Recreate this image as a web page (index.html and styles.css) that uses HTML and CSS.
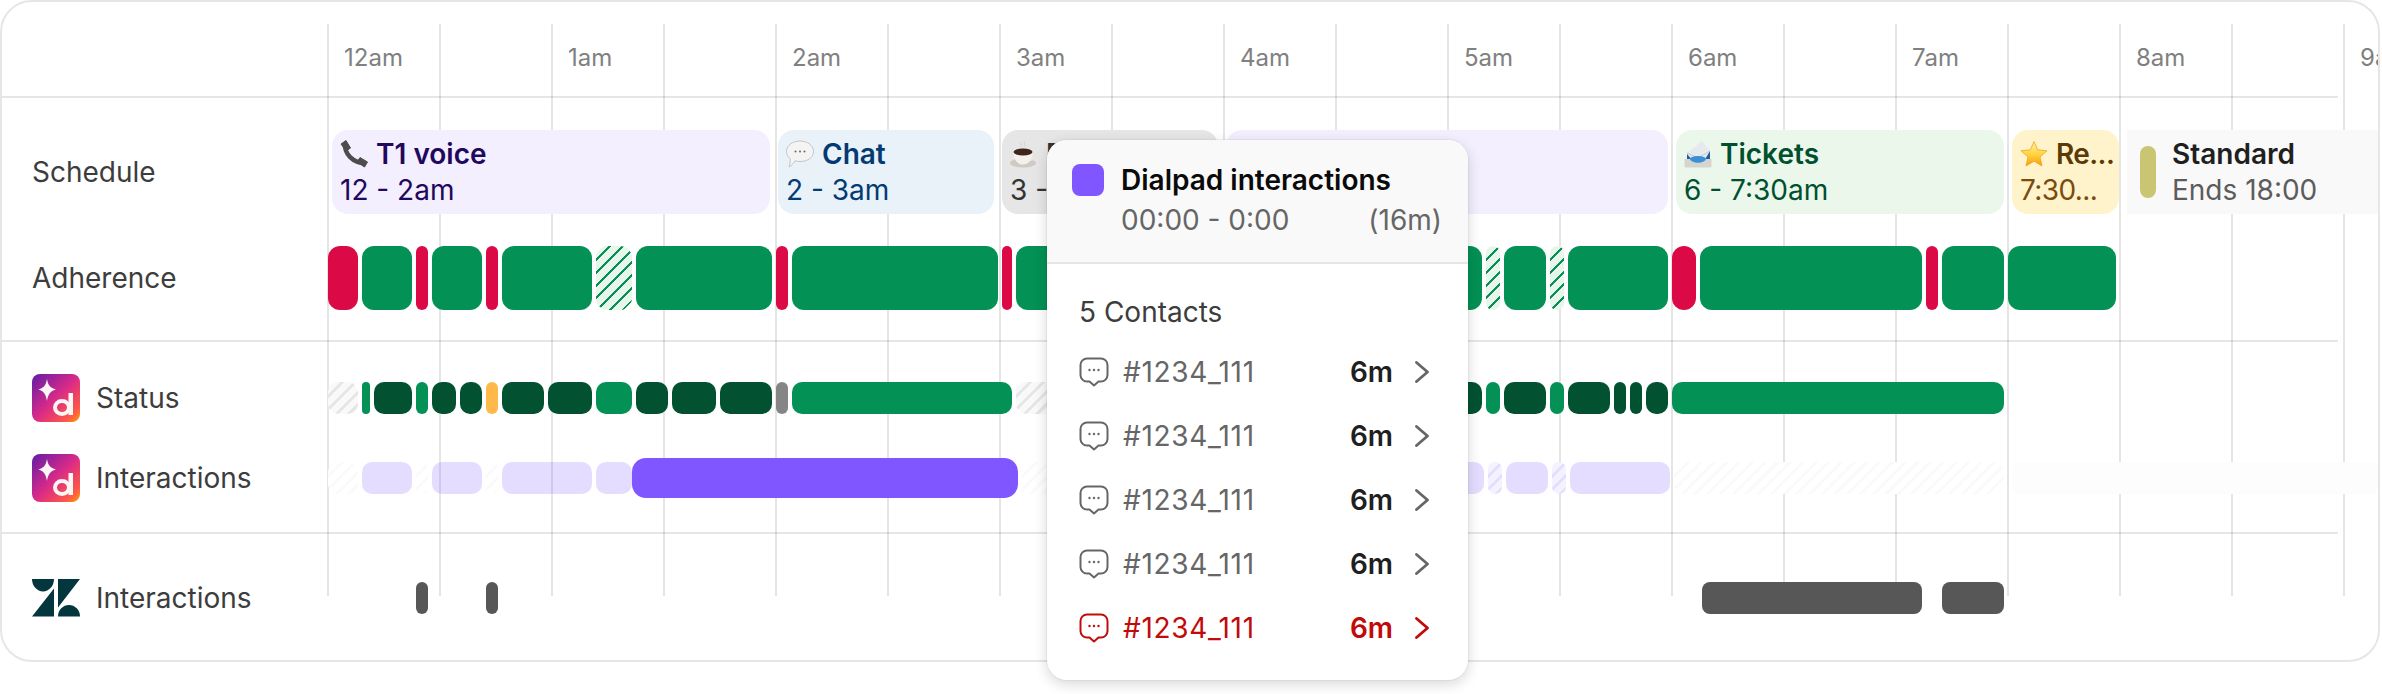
FILE: index.html

```html
<!DOCTYPE html>
<html lang="en">
<head>
    <meta charset="UTF-8">
    <title>Agent timeline</title>
    <link rel="stylesheet" href="styles.css">
</head>
<body>
<svg class="sprite" width="0" height="0">
    <defs>
        <linearGradient id="dpGrad" x1="0" y1="0" x2="1" y2="1">
            <stop offset="0" stop-color="#5f1ea6"/>
            <stop offset="0.5" stop-color="#d92a88"/>
            <stop offset="0.85" stop-color="#ff5a45"/>
            <stop offset="1" stop-color="#ffa000"/>
        </linearGradient>
        <linearGradient id="starGrad" x1="0" y1="0" x2="0" y2="1">
            <stop offset="0" stop-color="#fff3a8"/>
            <stop offset="0.55" stop-color="#ffd23c"/>
            <stop offset="1" stop-color="#f59a10"/>
        </linearGradient>
        <symbol id="dialpad" viewBox="0 0 48 48">
            <rect width="48" height="48" rx="8" fill="url(#dpGrad)"/>
            <path d="M15 5 C16 11 18 14 24 15.500 C18 17 16 21 15 27 C14 21 12 17 6.500 15.500 C12 14 14 11 15 5Z" fill="#faf6f6"/>
            <ellipse cx="30" cy="33.500" rx="7" ry="6.500" fill="none" stroke="#faf6f6" stroke-width="4"/>
            <rect x="36.500" y="19" width="4.500" height="22" fill="#faf6f6"/>
        </symbol>
        <symbol id="zendesk" viewBox="0 0 48 38">
            <path d="M0 0 H22 A11 12.500 0 0 1 0 0Z M22 9.500 V37.500 H0Z M26 0 H48 L26 28.500Z M26 37.500 A11 11.500 0 0 1 48 37.500Z" fill="#03363d"/>
        </symbol>
        <symbol id="bubble" viewBox="0 0 30 30">
            <path d="M8 1.500 H22 A6.500 6.500 0 0 1 28.500 8 V18 A6.500 6.500 0 0 1 22 24.500 H19.500 L15 28.500 L10.500 24.500 H8 A6.500 6.500 0 0 1 1.500 18 V8 A6.500 6.500 0 0 1 8 1.500Z" fill="none" stroke="currentColor" stroke-width="2" stroke-linejoin="round"/>
            <circle cx="10.500" cy="13" r="1.200" fill="currentColor"/>
            <circle cx="15" cy="13" r="1.200" fill="currentColor"/>
            <circle cx="19.500" cy="13" r="1.200" fill="currentColor"/>
        </symbol>
        <symbol id="chevron" viewBox="0 0 14 22">
            <path d="M1.500 1.500 L12.500 11 L1.500 20.500" fill="none" stroke="currentColor" stroke-width="2.800" stroke-linecap="round" stroke-linejoin="round"/>
        </symbol>
        <symbol id="emoji-phone" viewBox="0 0 28 28">
            <path d="M5 3 C4 14 13 23 25 23" fill="none" stroke="#4d4d4d" stroke-width="4.500"/>
            <path d="M1 4 L6 0.500 L10.500 8 L6 11Z M17 22 L20 17.500 L27.500 22 L24.500 27Z" fill="#4d4d4d" stroke="#4d4d4d" stroke-linejoin="round"/>
        </symbol>
        <symbol id="emoji-speech" viewBox="0 0 28 28">
            <path d="M14 1 C21.500 1 27.500 5.500 27.500 11.500 C27.500 17.500 21.500 21.500 14 21.500 C12 21.500 10.500 21.300 9 20.800 C7.500 23.500 5.500 26 3 27 C4 24.500 4.300 21.500 4.200 18.800 C2 17 0.500 14.500 0.500 11.500 C0.500 5.500 6.500 1 14 1Z" fill="#f4f4f4" stroke="#c4c4c4"/>
            <circle cx="9.500" cy="11.500" r="1" fill="#666"/>
            <circle cx="14" cy="11.500" r="1" fill="#666"/>
            <circle cx="18.500" cy="11.500" r="1" fill="#666"/>
        </symbol>
        <symbol id="emoji-coffee" viewBox="0 0 28 28">
            <ellipse cx="13" cy="23" rx="13" ry="4.500" fill="#cfcac2"/>
            <path d="M11 2 C9.500 4 12.500 5 11 7 M14.500 1 C13 3 16 4 14.500 6.500" fill="none" stroke="#d8d8d8" stroke-width="1.200"/>
            <path d="M22 14 C28 11 28.500 19 20 20" fill="none" stroke="#e8e5e0" stroke-width="2"/>
            <path d="M3.500 12 H22.500 C22.500 19 19 24.500 13 24.500 C7 24.500 3.500 19 3.500 12Z" fill="#f4f1ec"/>
            <ellipse cx="13" cy="12" rx="9.500" ry="3.500" fill="#3d261a"/>
        </symbol>
        <symbol id="emoji-inbox" viewBox="0 0 28 28">
            <path d="M3 13 L18 1 L26 11 L25 21 H3Z" fill="#e6e9ee"/>
            <path d="M3 13 L14 18 L26 11" fill="none" stroke="#b9bfc9" stroke-width="0.800"/>
            <path d="M3 14 L9 21 H3Z M26 11 L20 21 H26Z" fill="#1f5f9e"/>
            <ellipse cx="14" cy="20" rx="9" ry="4" fill="#3b8fd6"/>
            <path d="M0.500 19 H6 C8 24 20 24 22 19 H27.500 V26 A1.500 1.500 0 0 1 26 27.500 H2 A1.500 1.500 0 0 1 0.500 26Z" fill="#d5d5cf"/>
        </symbol>
        <symbol id="emoji-star" viewBox="0 0 28 28">
            <path d="M14 1.500 L17.700 9.800 L27 10.800 L20 16.800 L22 26 L14 21.200 L6 26 L8 16.800 L1 10.800 L10.300 9.800Z" fill="url(#starGrad)" stroke="#f2a516" stroke-width="0.800" stroke-linejoin="round"/>
        </symbol>
    </defs>
</svg>

<div class="page">
    <div class="card">
        <!-- vertical half hour lines, they sit under the rows -->
        <div class="grid-lines">
            <i></i><i></i><i></i><i></i><i></i><i></i><i></i><i></i><i></i><i></i>
            <i></i><i></i><i></i><i></i><i></i><i></i><i></i><i></i><i></i>
        </div>

        <div class="section section-head">
            <div class="label"></div>
            <div class="hours">
                <span class="hour">12am</span>
                <span class="hour">1am</span>
                <span class="hour">2am</span>
                <span class="hour">3am</span>
                <span class="hour">4am</span>
                <span class="hour">5am</span>
                <span class="hour">6am</span>
                <span class="hour">7am</span>
                <span class="hour">8am</span>
                <span class="hour">9am</span>
            </div>
        </div>

        <div class="section section-agent">
            <div class="row row-schedule">
                <div class="label">Schedule</div>
                <div class="track pills">
                    <div class="pill pill-purple" style="width:438px">
                        <div class="pill-title"><svg class="emoji"><use href="#emoji-phone"/></svg><span>T1 voice</span></div>
                        <div class="pill-time">12 - 2am</div>
                    </div>
                    <div class="pill pill-blue" style="width:216px">
                        <div class="pill-title"><svg class="emoji"><use href="#emoji-speech"/></svg><span>Chat</span></div>
                        <div class="pill-time">2 - 3am</div>
                    </div>
                    <div class="pill pill-grey" style="width:216px">
                        <div class="pill-title"><svg class="emoji"><use href="#emoji-coffee"/></svg><span>Break</span></div>
                        <div class="pill-time">3 - 4am</div>
                    </div>
                    <div class="pill pill-purple" style="width:442px"></div>
                    <div class="pill pill-green" style="width:328px">
                        <div class="pill-title"><svg class="emoji"><use href="#emoji-inbox"/></svg><span>Tickets</span></div>
                        <div class="pill-time">6 - 7:30am</div>
                    </div>
                    <div class="pill pill-yellow" style="width:107px">
                        <div class="pill-title"><svg class="emoji"><use href="#emoji-star"/></svg><span>Re...</span></div>
                        <div class="pill-time">7:30...</div>
                    </div>
                    <div class="shift">
                        <div class="shift-mark"></div>
                        <div>
                            <div class="shift-name">Standard</div>
                            <div class="shift-ends">Ends 18:00</div>
                        </div>
                    </div>
                </div>
            </div>
            <div class="row row-adherence">
                <div class="label">Adherence</div>
                <div class="track bars bars-tall">
                    <div class="bar red" style="width:30px"></div>
                    <div class="bar green" style="width:50px"></div>
                    <div class="bar red" style="width:12px"></div>
                    <div class="bar green" style="width:50px"></div>
                    <div class="bar red" style="width:12px"></div>
                    <div class="bar green" style="width:90px"></div>
                    <div class="bar hatch-green" style="width:36px"></div>
                    <div class="bar green" style="width:136px"></div>
                    <div class="bar red" style="width:12px"></div>
                    <div class="bar green" style="width:206px"></div>
                    <div class="bar red" style="width:10px"></div>
                    <div class="bar green" style="width:466px"></div>
                    <div class="bar hatch-green" style="width:14px"></div>
                    <div class="bar green" style="width:42px"></div>
                    <div class="bar hatch-green" style="width:14px"></div>
                    <div class="bar green" style="width:100px"></div>
                    <div class="bar red" style="width:24px"></div>
                    <div class="bar green" style="width:222px"></div>
                    <div class="bar red" style="width:12px"></div>
                    <div class="bar green" style="width:62px"></div>
                    <div class="bar green" style="width:108px"></div>
                </div>
            </div>
        </div>

        <div class="section section-dialpad">
            <div class="row">
                <div class="label"><svg class="logo"><use href="#dialpad"/></svg>Status</div>
                <div class="track bars">
                    <div class="bar hatch-grey" style="width:30px"></div>
                    <div class="bar green" style="width:8px"></div>
                    <div class="bar dark" style="width:38px"></div>
                    <div class="bar green" style="width:12px"></div>
                    <div class="bar dark" style="width:24px"></div>
                    <div class="bar dark" style="width:22px"></div>
                    <div class="bar orange" style="width:12px"></div>
                    <div class="bar dark" style="width:42px"></div>
                    <div class="bar dark" style="width:44px"></div>
                    <div class="bar green" style="width:36px"></div>
                    <div class="bar dark" style="width:32px"></div>
                    <div class="bar dark" style="width:44px"></div>
                    <div class="bar dark" style="width:52px"></div>
                    <div class="bar grey" style="width:12px"></div>
                    <div class="bar green" style="width:220px"></div>
                    <div class="bar hatch-grey" style="width:84px"></div>
                    <div class="bar dark" style="width:378px"></div>
                    <div class="bar green" style="width:14px"></div>
                    <div class="bar dark" style="width:42px"></div>
                    <div class="bar green" style="width:14px"></div>
                    <div class="bar dark" style="width:42px"></div>
                    <div class="bar dark" style="width:12px"></div>
                    <div class="bar dark" style="width:12px"></div>
                    <div class="bar dark" style="width:22px"></div>
                    <div class="bar green" style="width:332px"></div>
                </div>
            </div>
            <div class="row">
                <div class="label"><svg class="logo"><use href="#dialpad"/></svg>Interactions</div>
                <div class="track bars">
                    <div class="bar hatch-faint" style="width:30px"></div>
                    <div class="bar lilac" style="width:50px"></div>
                    <div class="bar hatch-faint" style="width:12px"></div>
                    <div class="bar lilac" style="width:50px"></div>
                    <div class="bar hatch-faint" style="width:12px"></div>
                    <div class="bar lilac" style="width:90px"></div>
                    <div class="bar lilac" style="width:36px"></div>
                    <div class="bar active" style="width:386px"></div>
                    <div class="bar hatch-faint" style="width:78px"></div>
                    <div class="bar lilac" style="width:380px"></div>
                    <div class="bar hatch-lilac" style="width:14px"></div>
                    <div class="bar lilac" style="width:42px"></div>
                    <div class="bar hatch-lilac" style="width:14px"></div>
                    <div class="bar lilac" style="width:100px"></div>
                    <div class="bar hatch-faint" style="width:330px"></div>
                    <div class="bar hatch-off" style="width:368px"></div>
                </div>
            </div>
        </div>

        <div class="section section-zendesk">
            <div class="row">
                <div class="label"><svg class="logo logo-zendesk"><use href="#zendesk"/></svg>Interactions</div>
                <div class="track bars bars-sparse">
                    <div class="bar slate" style="width:12px;margin-left:88px"></div>
                    <div class="bar slate" style="width:12px;margin-left:58px"></div>
                    <div class="bar slate" style="width:220px;margin-left:1204px"></div>
                    <div class="bar slate" style="width:62px;margin-left:20px"></div>
                </div>
            </div>
        </div>
    </div>

    <div class="popover">
        <div class="popover-head">
            <div class="swatch"></div>
            <div class="popover-info">
                <div class="popover-title">Dialpad interactions</div>
                <div class="popover-time"><span>00:00 - 0:00</span><span>(16m)</span></div>
            </div>
        </div>
        <div class="popover-body">
            <div class="contacts-title">5 Contacts</div>
            <div class="contact">
                <svg class="contact-icon"><use href="#bubble"/></svg>
                <span class="contact-id">#1234_111</span>
                <span class="contact-time">6m</span>
                <svg class="contact-arrow"><use href="#chevron"/></svg>
            </div>
            <div class="contact">
                <svg class="contact-icon"><use href="#bubble"/></svg>
                <span class="contact-id">#1234_111</span>
                <span class="contact-time">6m</span>
                <svg class="contact-arrow"><use href="#chevron"/></svg>
            </div>
            <div class="contact">
                <svg class="contact-icon"><use href="#bubble"/></svg>
                <span class="contact-id">#1234_111</span>
                <span class="contact-time">6m</span>
                <svg class="contact-arrow"><use href="#chevron"/></svg>
            </div>
            <div class="contact">
                <svg class="contact-icon"><use href="#bubble"/></svg>
                <span class="contact-id">#1234_111</span>
                <span class="contact-time">6m</span>
                <svg class="contact-arrow"><use href="#chevron"/></svg>
            </div>
            <div class="contact contact-alert">
                <svg class="contact-icon"><use href="#bubble"/></svg>
                <span class="contact-id">#1234_111</span>
                <span class="contact-time">6m</span>
                <svg class="contact-arrow"><use href="#chevron"/></svg>
            </div>
        </div>
    </div>
</div>
</body>
</html>
```

FILE: styles.css

```css
body {
    margin: 0;
    background: #fff;
    font-family: Inter, "Liberation Sans", sans-serif;
    font-size: 28px;
    color: #3d3d3d;
}
.sprite {
    position: absolute;
}
.page {
    position: relative;
    width: 2380px;
    height: 694px;
}
.card {
    position: relative;
    box-sizing: border-box;
    width: 2380px;
    height: 662px;
    border: 2px solid #e6e6e6;
    border-radius: 32px;
    overflow: hidden;
}

/* grid */
.grid-lines {
    position: absolute;
    left: 325px;
    top: 22px;
    height: 572px;
    display: flex;
}
.grid-lines i {
    flex: none;
    box-sizing: border-box;
    width: 112px;
    border-left: 2px solid rgba(0, 0, 0, 0.1);
}

/* sections */
.section {
    box-sizing: border-box;
    width: 2336px;
    border-bottom: 2px solid #e6e6e6;
}
.section-head {
    display: flex;
    height: 96px;
    align-items: center;
}
.section-agent {
    height: 244px;
    padding-top: 32px;
    display: flex;
    flex-direction: column;
    gap: 32px;
}
.section-dialpad {
    height: 192px;
    padding-top: 32px;
    display: flex;
    flex-direction: column;
    gap: 32px;
}
.section-zendesk {
    height: 126px;
    padding-top: 40px;
    border-bottom: none;
}
.row {
    display: flex;
    align-items: center;
    height: 48px;
}
.row-schedule {
    height: 84px;
}
.row-adherence {
    height: 64px;
}
.label {
    flex: none;
    box-sizing: border-box;
    width: 326px;
    padding-left: 30px;
    display: flex;
    align-items: center;
    gap: 16px;
    line-height: 32px;
}
.logo {
    width: 48px;
    height: 48px;
    flex: none;
}
.logo-zendesk {
    height: 38px;
}
.track {
    position: relative;
    z-index: 1;
    display: flex;
    align-items: center;
    flex: none;
}

/* hours */
.hours {
    display: flex;
    flex: none;
    font-size: 24px;
    color: #808080;
    position: relative;
    top: 8px;
}
.hour {
    flex: none;
    box-sizing: border-box;
    width: 224px;
    padding-left: 16px;
}

/* schedule pills */
.pills {
    gap: 8px;
    margin-left: 4px;
}
.pill {
    flex: none;
    box-sizing: border-box;
    height: 84px;
    padding: 6px 8px;
    border-radius: 16px;
    line-height: 36px;
}
.pill-title {
    display: flex;
    align-items: center;
    gap: 8px;
    font-weight: 600;
}
.pill-title span,
.pill-time {
    white-space: nowrap;
}
.emoji {
    flex: none;
    width: 28px;
    height: 28px;
}
.pill-purple {
    background-color: #f3effe;
    color: #22085c;
}
.pill-blue {
    background-color: #e9f1f9;
    color: #023a73;
}
.pill-grey {
    background-color: #e6e6e6;
    color: #333;
}
.pill-green {
    background-color: #ecf7ec;
    color: #00502f;
}
.pill-yellow {
    background-color: #fff3cc;
    color: #5c3a07;
    letter-spacing: -0.6px;
}
.pill-yellow .pill-time {
    color: #7a4b0c;
}
.shift {
    flex: none;
    box-sizing: border-box;
    display: flex;
    align-items: center;
    gap: 16px;
    width: 300px;
    height: 84px;
    padding-left: 13px;
    background-color: #f9f9f9;
    line-height: 36px;
}
.shift-mark {
    width: 16px;
    height: 52px;
    border-radius: 8px;
    background-color: #c9c573;
}
.shift-name {
    font-weight: 600;
    color: #1f1f1f;
}
.shift-ends {
    color: #5c5c5c;
}

/* bars */
.bars {
    gap: 4px;
}
.bar {
    flex: none;
    height: 32px;
    border-radius: 10px;
}
.bars-tall .bar {
    height: 64px;
    border-radius: 12px;
}
.bars-sparse {
    gap: 0;
}
.green {
    background-color: #039155;
}
.dark {
    background-color: #025232;
}
.red {
    background-color: #db0a47;
}
.orange {
    background-color: #ffb84a;
}
.grey {
    background-color: #858585;
}
.slate {
    background-color: #575757;
    border-radius: 8px;
}
.lilac {
    background-color: rgba(127, 86, 255, 0.2);
}
.active {
    height: 40px;
    margin-left: -4px;
    border-radius: 14px;
    background-color: #7f56ff;
}
.hatch-green {
    background: repeating-linear-gradient(135deg, #039155 0 2px, #e8f5ea 2px 9px);
}
.hatch-grey {
    background: repeating-linear-gradient(135deg, #e6e6e6 0 3px, #f9f9f9 3px 9px);
}
.hatch-faint {
    background: repeating-linear-gradient(135deg, #fafafa 0 3px, #fff 3px 9px);
}
.hatch-lilac {
    background: repeating-linear-gradient(135deg, #e5ddff 0 3px, #f5f2ff 3px 9px);
}
.hatch-off {
    margin-left: 4px;
    border-radius: 8px;
    background-color: #fdfdfd;
}

/* popover */
.popover {
    position: absolute;
    left: 1047px;
    top: 140px;
    z-index: 5;
    box-sizing: border-box;
    width: 421px;
    height: 540px;
    border-radius: 20px;
    background-color: #fff;
    box-shadow: 0 0 0 1px rgba(0, 0, 0, 0.04), 0 4px 14px rgba(0, 0, 0, 0.16);
    overflow: hidden;
}
.popover-head {
    box-sizing: border-box;
    display: flex;
    gap: 17px;
    height: 124px;
    padding: 24px 26px 0 25px;
    background-color: #f9f9f9;
    border-bottom: 2px solid #e6e6e6;
}
.swatch {
    flex: none;
    width: 32px;
    height: 32px;
    border-radius: 8px;
    background-color: #7f56ff;
}
.popover-info {
    flex: 1;
    margin-top: -2px;
}
.popover-title {
    font-weight: 600;
    line-height: 36px;
    color: #0a0a0a;
}
.popover-time {
    display: flex;
    justify-content: space-between;
    margin-top: 4px;
    line-height: 36px;
    color: #666;
}
.popover-body {
    padding: 32px 39px 0 32px;
}
.contacts-title {
    line-height: 32px;
    margin-bottom: 12px;
}
.contact {
    display: flex;
    align-items: center;
    height: 64px;
    color: #666;
}
.contact-icon {
    flex: none;
    width: 30px;
    height: 30px;
    margin-right: 14px;
}
.contact-id {
    flex: 1;
    letter-spacing: 0.7px;
}
.contact-time {
    margin-right: 22px;
    font-weight: 600;
    color: #1f1f1f;
}
.contact-arrow {
    flex: none;
    width: 14px;
    height: 22px;
}
.contact-alert,
.contact-alert .contact-time {
    color: #c20a0a;
}
```
